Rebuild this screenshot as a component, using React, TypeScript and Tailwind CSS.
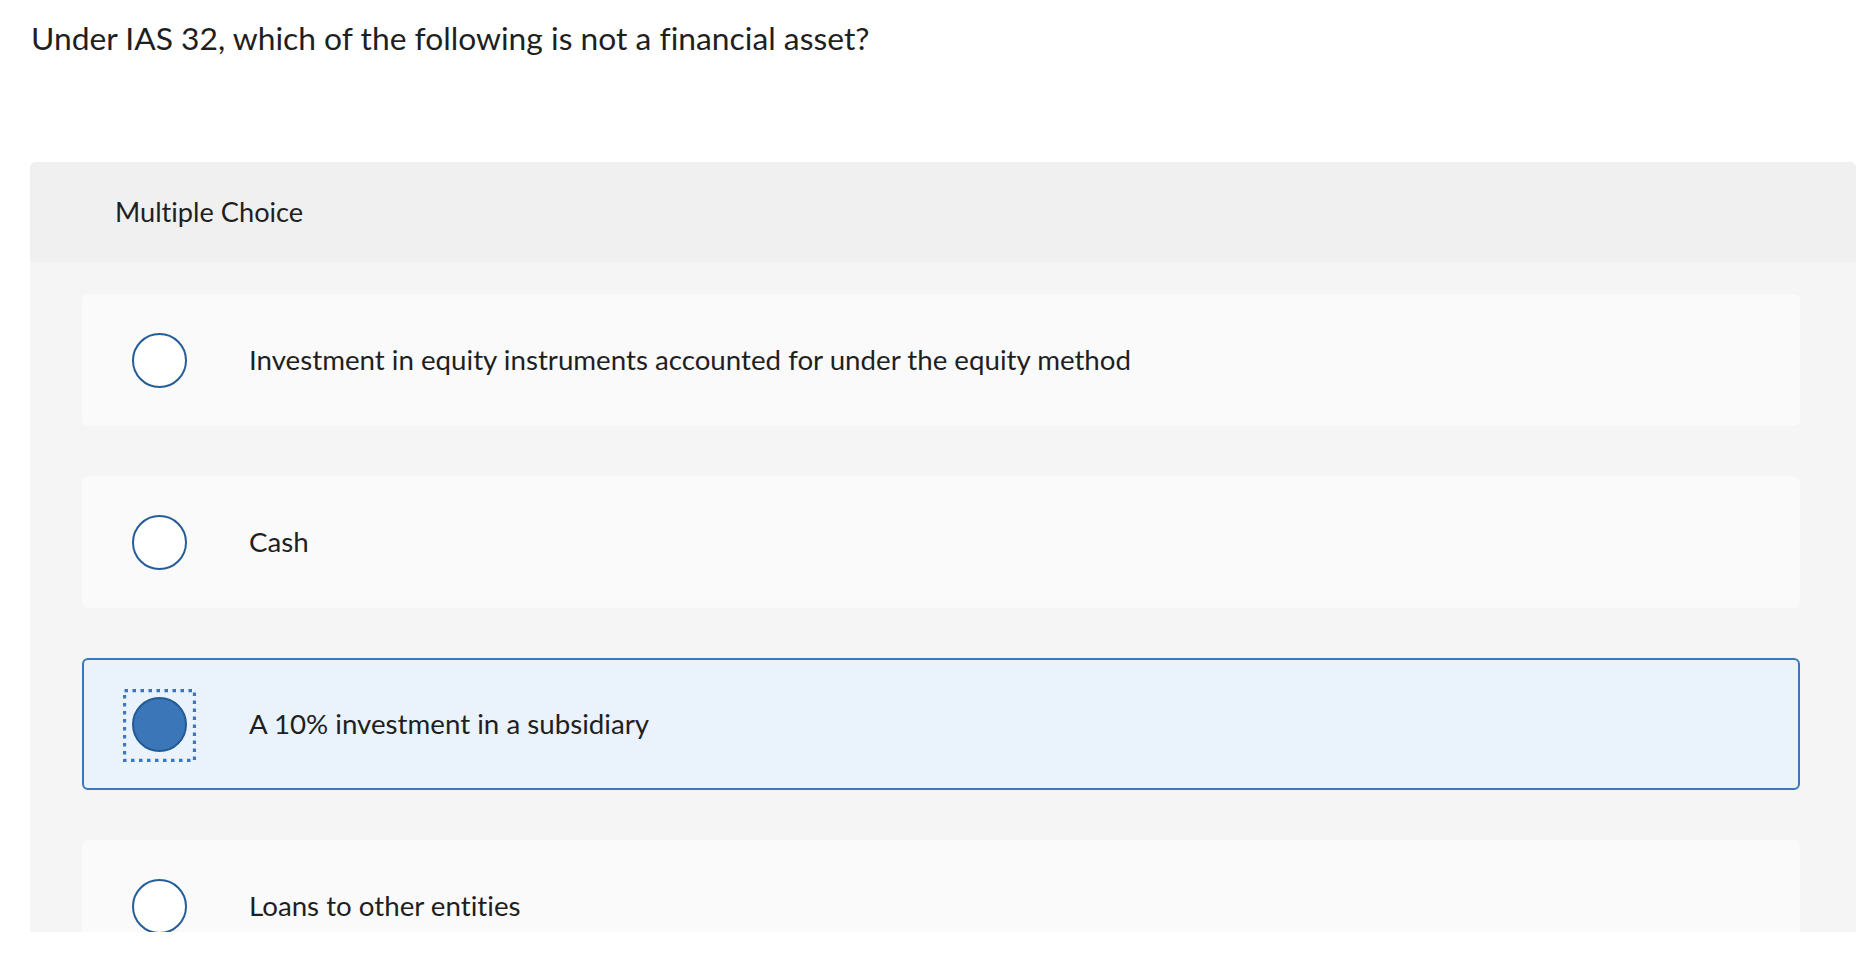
import React from "react";

const options = [
  "Investment in equity instruments accounted for under the equity method",
  "Cash",
  "A 10% investment in a subsidiary",
  "Loans to other entities",
];

function Radio({ selected }: { selected: boolean }) {
  if (selected) {
    return (
      <div className="relative w-[55px] h-[55px] shrink-0">
        <div className="w-[55px] h-[55px] rounded-full bg-[#3b77b8] border-2 border-[#235b96]" />
        <svg
          className="absolute left-[-9px] top-[-8px] pointer-events-none"
          width="73"
          height="73"
          viewBox="0 0 73 73"
        >
          <rect
            x="1.5"
            y="1.5"
            width="70"
            height="70"
            fill="none"
            stroke="#3a77c0"
            strokeWidth="3.3"
            strokeDasharray="3.5 4.5"
          />
        </svg>
      </div>
    );
  }
  return <div className="w-[55px] h-[55px] shrink-0 rounded-full bg-white border-[2.5px] border-[#245d97]" />;
}

export default function App() {
  const selectedIndex = 2;
  return (
    <div
      className="w-[1870px] h-[966px] bg-white overflow-hidden text-[#1f1f1f] [font-variant-ligatures:none]"
      style={{ fontFamily: "Lato, 'Open Sans', sans-serif" }}
    >
      <div className="pl-[31px] pt-[20px] h-[162px]">
        <h1 className="text-[31.8px] leading-[36px] font-normal">
          Under IAS 32, which of the following is not a financial asset?
        </h1>
      </div>
      <div className="ml-[30px] mr-[14px] h-[770px] rounded-t-[6px] overflow-hidden bg-[#f5f5f5] flex flex-col">
        <div className="h-[100px] shrink-0 bg-[#f0f0f0] flex items-center pl-[85px]">
          <span className="text-[27.2px]">Multiple Choice</span>
        </div>
        <div className="flex flex-col gap-[50px] pt-[32px] pl-[52px] pr-[56px]">
          {options.map((opt, i) => {
            const sel = i === selectedIndex;
            return (
              <div
                key={opt}
                className={
                  sel
                    ? "h-[132px] shrink-0 rounded-[6px] border-2 border-[#3b77b8] bg-[#eaf2fb] flex items-center pl-[48px]"
                    : "h-[132px] shrink-0 rounded-[6px] bg-[#fafafa] flex items-center pl-[50px]"
                }
              >
                <Radio selected={sel} />
                <span className="ml-[62px] text-[27.7px]">{opt}</span>
              </div>
            );
          })}
        </div>
      </div>
    </div>
  );
}
